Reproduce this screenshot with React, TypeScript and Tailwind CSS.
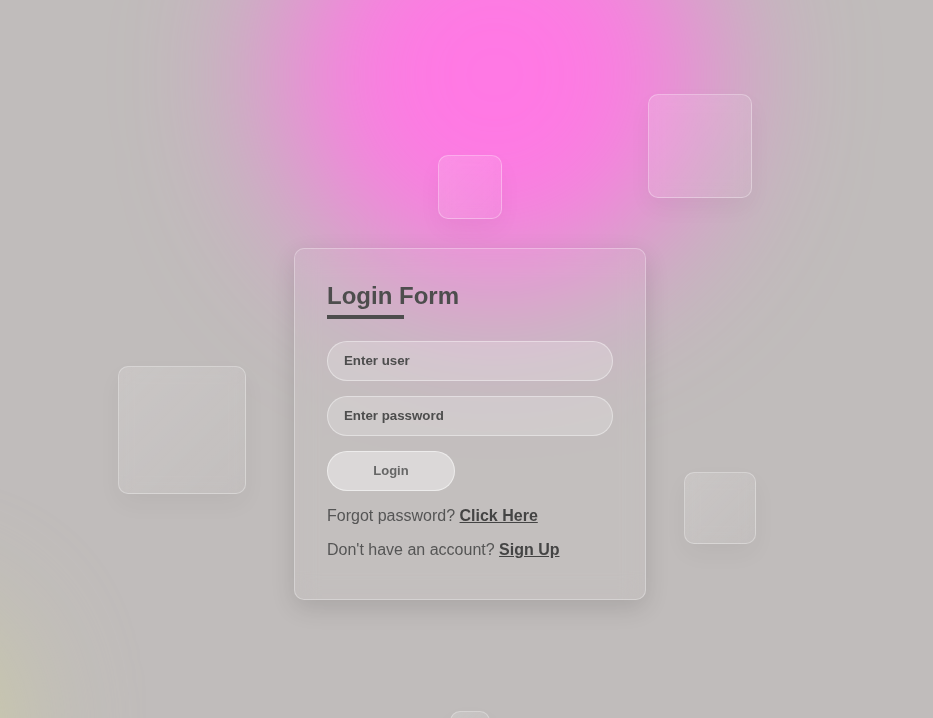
import React from 'react';

const squares = [
  'left-[438px] top-[155px] w-16 h-16',
  'left-[648px] top-[94px] w-[104px] h-[104px]',
  'left-[118px] top-[366px] w-32 h-32',
  'left-[684px] top-[472px] w-[72px] h-[72px]',
  'left-[450px] top-[711px] w-10 h-10',
];

export default function App() {
  return (
    <div
      className="relative w-full h-[718px] overflow-hidden bg-[#c0bcbb]"
      style={{ fontFamily: '"Liberation Sans", Arial, sans-serif' }}
    >
      {/* background glows */}
      <div className="absolute left-[280px] top-[-140px] w-[430px] h-[430px] rounded-full bg-[#ff78e4] blur-[75px]"></div>
      <div className="absolute left-[-200px] top-[600px] w-[220px] h-[260px] rounded-full bg-[#cfd0a0] opacity-70 blur-[60px]"></div>

      {/* floating glass squares */}
      {squares.map((cls, i) => (
        <div
          key={i}
          className={`absolute ${cls} rounded-[10px] border border-white/30 bg-gradient-to-br from-white/15 to-white/5 backdrop-blur-sm shadow-[0_10px_25px_rgba(0,0,0,0.04)]`}
        ></div>
      ))}

      <div className="relative flex justify-center pt-[248px] pl-[7px]">
        <div className="w-[352px] h-[352px] rounded-[10px] border border-white/30 bg-white/5 backdrop-blur-md shadow-[0_8px_24px_rgba(0,0,0,0.12)] px-[32px] pt-[31px]">
          <h2 className="text-[24px] leading-[32px] font-bold text-[#4d4d4d]">Login Form</h2>
          <div className="mt-[3px] h-1 w-[77px] bg-[#4d4d4d]"></div>

          <div className="mt-[22px] h-10 w-[286px] rounded-full border border-white/40 bg-white/20 flex items-center pl-4">
            <span className="text-[13.3px] font-bold text-[#4d4d4d]">Enter user</span>
          </div>
          <div className="mt-[15px] h-10 w-[286px] rounded-full border border-white/40 bg-white/20 flex items-center pl-4">
            <span className="text-[13.3px] font-bold text-[#4d4d4d]">Enter password</span>
          </div>
          <button className="mt-[15px] h-10 w-32 rounded-full border border-white/50 bg-white/40 text-[13px] font-bold text-[#666]">
            Login
          </button>

          <p className="mt-[13px] text-[16px] leading-6 text-[#555]">
            Forgot password? <span className="font-bold underline text-[#444]">Click Here</span>
          </p>
          <p className="mt-[10px] text-[16px] leading-6 text-[#555]">
            Don't have an account? <span className="font-bold underline text-[#444]">Sign Up</span>
          </p>
        </div>
      </div>
    </div>
  );
}
